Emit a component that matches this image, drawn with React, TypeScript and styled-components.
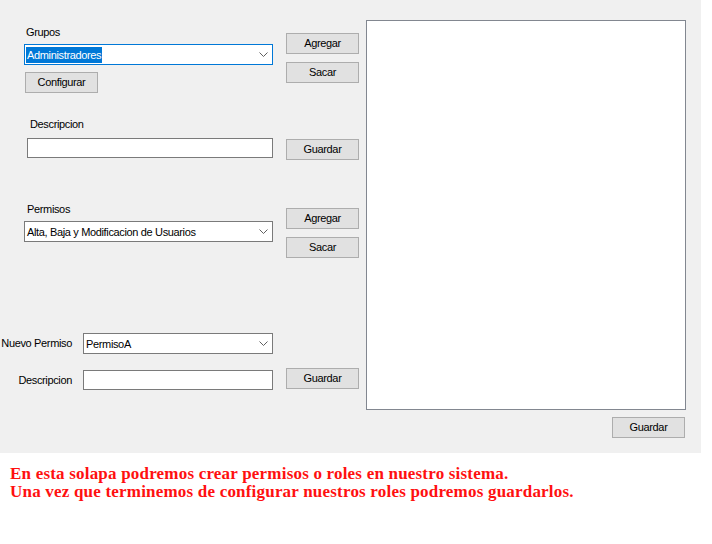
import React from "react";
import styled, { createGlobalStyle } from "styled-components";

const GlobalStyle = createGlobalStyle`
    html, body {
        margin: 0;
        padding: 0;
        background: #ffffff;
    }
    body {
        font-family: "Liberation Sans", Arial, sans-serif;
    }
`;

const Panel = styled.div`
    width: 701px;
    height: 453px;
    background: #f0f0f0;
    display: flex;
    font-size: 11px;
    letter-spacing: -0.35px;
    color: #000;
`;

const LeftPane = styled.div`
    width: 366px;
    display: flex;
    flex-direction: column;
`;

const RightPane = styled.div`
    width: 320px;
    padding-top: 20px;
    display: flex;
    flex-direction: column;
    align-items: flex-end;
`;

const FieldRow = styled.div<{ $mt: number }>`
    display: flex;
    align-items: flex-start;
    margin-top: ${(p) => p.$mt}px;
`;

const FieldCol = styled.div<{ $mt?: number }>`
    width: 286px;
    display: flex;
    flex-direction: column;
    align-items: flex-start;
    margin-top: ${(p) => p.$mt || 0}px;
`;

const ButtonCol = styled.div<{ $mt: number }>`
    display: flex;
    flex-direction: column;
    gap: 8px;
    margin-top: ${(p) => p.$mt}px;
`;

const Label = styled.span<{ $indent: number }>`
    line-height: 15px;
    margin-left: ${(p) => p.$indent}px;
`;

const InlineRow = styled.div`
    display: flex;
    align-items: center;
`;

const InlineLabel = styled.span`
    width: 83px;
    box-sizing: border-box;
    padding-right: 11px;
    text-align: right;
    line-height: 15px;
`;

const Combo = styled.div<{ $w: number; $ml?: number; $mt?: number; $focused?: boolean }>`
    box-sizing: border-box;
    width: ${(p) => p.$w}px;
    height: 21px;
    margin-left: ${(p) => p.$ml || 0}px;
    margin-top: ${(p) => p.$mt || 0}px;
    border: 1px solid ${(p) => (p.$focused ? "#0078d7" : "#7a7a7a")};
    background: #ffffff;
    display: flex;
    align-items: center;
    justify-content: space-between;
    padding: 0 4px 0 1px;
`;

const ComboText = styled.span<{ $selected?: boolean }>`
    line-height: 16px;
    padding: 0 1px;
    white-space: nowrap;
    background: ${(p) => (p.$selected ? "#0078d7" : "transparent")};
    color: ${(p) => (p.$selected ? "#ffffff" : "#000000")};
`;

const Chevron = styled.svg`
    display: block;
    flex: none;
`;

const TextBox = styled.input<{ $w: number; $ml?: number; $mt?: number }>`
    box-sizing: border-box;
    width: ${(p) => p.$w}px;
    height: 20px;
    margin: ${(p) => p.$mt || 0}px 0 0 ${(p) => p.$ml || 0}px;
    border: 1px solid #7a7a7a;
    background: #ffffff;
    padding: 0 2px;
    font: inherit;
    outline: none;
`;

const Button = styled.button<{ $ml?: number; $mt?: number; $mr?: number }>`
    box-sizing: border-box;
    width: 73px;
    height: 21px;
    margin: ${(p) => p.$mt || 0}px ${(p) => p.$mr || 0}px 0 ${(p) => p.$ml || 0}px;
    padding: 0;
    border: 1px solid #adadad;
    background: #e1e1e1;
    color: #000;
    font-family: inherit;
    font-size: inherit;
    letter-spacing: inherit;
    line-height: 19px;
`;

const ListBox = styled.div`
    box-sizing: border-box;
    width: 320px;
    height: 390px;
    border: 1px solid #828790;
    background: #ffffff;
`;

const Caption = styled.div`
    padding: 12px 10px;
    font-family: "Liberation Serif", "Times New Roman", serif;
    font-weight: bold;
    font-size: 17px;
    letter-spacing: 0.2px;
    line-height: 18px;
    color: #ff1010;
`;

const Arrow = () => (
    <Chevron width="9" height="5" viewBox="0 0 9 5">
        <polyline points="0.5,0.5 4.5,4.5 8.5,0.5" fill="none" stroke="#606060" strokeWidth="1" />
    </Chevron>
);

const ComboBox: React.FC<{ w: number; ml?: number; mt?: number; value: string; focused?: boolean }> = ({
    w,
    ml,
    mt,
    value,
    focused,
}) => (
    <Combo $w={w} $ml={ml} $mt={mt} $focused={focused}>
        <ComboText $selected={focused}>{value}</ComboText>
        <Arrow />
    </Combo>
);

export default function App() {
    return (
        <>
            <GlobalStyle />
            <Panel>
                <LeftPane>
                    <FieldRow $mt={25}>
                        <FieldCol>
                            <Label $indent={26}>Grupos</Label>
                            <ComboBox w={249} ml={24} mt={4} value="Administradores" focused />
                            <Button $ml={25} $mt={7}>Configurar</Button>
                        </FieldCol>
                        <ButtonCol $mt={8}>
                            <Button>Agregar</Button>
                            <Button>Sacar</Button>
                        </ButtonCol>
                    </FieldRow>

                    <FieldRow $mt={24}>
                        <FieldCol>
                            <Label $indent={30}>Descripcion</Label>
                            <TextBox $w={246} $ml={27} $mt={6} readOnly />
                        </FieldCol>
                        <ButtonCol $mt={22}>
                            <Button>Guardar</Button>
                        </ButtonCol>
                    </FieldRow>

                    <FieldRow $mt={42}>
                        <FieldCol>
                            <Label $indent={27}>Permisos</Label>
                            <ComboBox w={249} ml={24} mt={4} value="Alta, Baja y Modificacion de Usuarios" />
                        </FieldCol>
                        <ButtonCol $mt={6}>
                            <Button>Agregar</Button>
                            <Button>Sacar</Button>
                        </ButtonCol>
                    </FieldRow>

                    <FieldRow $mt={75}>
                        <InlineRow>
                            <InlineLabel>Nuevo Permiso</InlineLabel>
                            <ComboBox w={190} value="PermisoA" />
                        </InlineRow>
                    </FieldRow>

                    <FieldRow $mt={14}>
                        <FieldCol $mt={2}>
                            <InlineRow>
                                <InlineLabel>Descripcion</InlineLabel>
                                <TextBox $w={190} readOnly />
                            </InlineRow>
                        </FieldCol>
                        <ButtonCol $mt={0}>
                            <Button>Guardar</Button>
                        </ButtonCol>
                    </FieldRow>
                </LeftPane>

                <RightPane>
                    <ListBox />
                    <Button $mt={7} $mr={1}>Guardar</Button>
                </RightPane>
            </Panel>
            <Caption>
                En esta solapa podremos crear permisos o roles en nuestro sistema.
                <br />
                Una vez que terminemos de configurar nuestros roles podremos guardarlos.
            </Caption>
        </>
    );
}
